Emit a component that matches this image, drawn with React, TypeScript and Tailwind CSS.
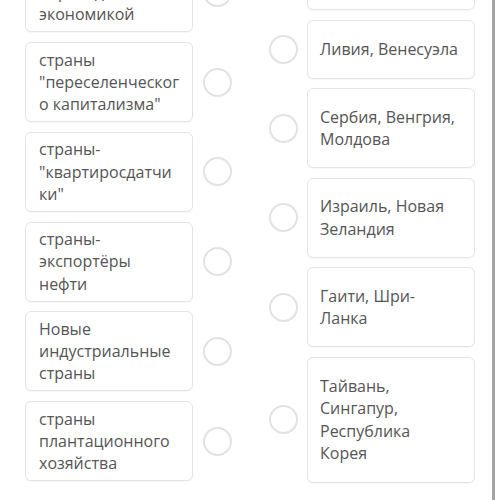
const leftItems = [
  "страны с\nпереходной\nэкономикой",
  "страны\n\"переселенческог\nо капитализма\"",
  "страны-\n\"квартиросдатчи\nки\"",
  "страны-\nэкспортёры\nнефти",
  "Новые\nиндустриальные\nстраны",
  "страны\nплантационного\nхозяйства",
];

const rightItems = [
  { text: "Китай, Вьетнам", h: "h-[59px]" },
  { text: "Ливия, Венесуэла", h: "h-[59px]" },
  { text: "Сербия, Венгрия,\nМолдова", h: "h-[80px]" },
  { text: "Израиль, Новая\nЗеландия", h: "h-[80px]" },
  { text: "Гаити, Шри-\nЛанка", h: "h-[80px]" },
  { text: "Тайвань,\nСингапур,\nРеспублика\nКорея", h: "h-[126px]" },
];

const Radio = () => (
  <div className="w-[29px] h-[29px] shrink-0 rounded-full border-2 border-[#e2e2e2] bg-white" />
);

export default function App() {
  return (
    <div className="w-[500px] h-[500px] overflow-hidden bg-white flex font-['Open_Sans',sans-serif] text-[16px] leading-[22.3px] text-[#555555]">
      <div className="w-[492px] flex items-start pl-[25px]">
        <div className="mt-[-47.75px] flex flex-col gap-[9.75px]">
          {leftItems.map((t, i) => (
            <div key={i} className="flex items-center gap-[10px]">
              <div className="w-[168px] h-[80px] flex items-center pl-[13px] pr-[6px] rounded-[6px] border border-[#e4e4e4] bg-white shadow-[0_1px_1px_rgba(0,0,0,0.03)]">
                <span className="whitespace-pre-line">{t}</span>
              </div>
              <Radio />
            </div>
          ))}
        </div>
        <div className="ml-[37px] mt-[-49px] flex flex-col gap-[9.5px]">
          {rightItems.map((it, i) => (
            <div key={i} className="flex items-center gap-[9px]">
              <Radio />
              <div className={`w-[168px] ${it.h} flex items-center pl-[12px] pr-[6px] rounded-[6px] border border-[#e4e4e4] bg-white shadow-[0_1px_1px_rgba(0,0,0,0.03)]`}>
                <span className="whitespace-pre-line">{it.text}</span>
              </div>
            </div>
          ))}
        </div>
      </div>
      <div className="w-[3px] h-full bg-[#a3a3a3]" />
    </div>
  );
}
